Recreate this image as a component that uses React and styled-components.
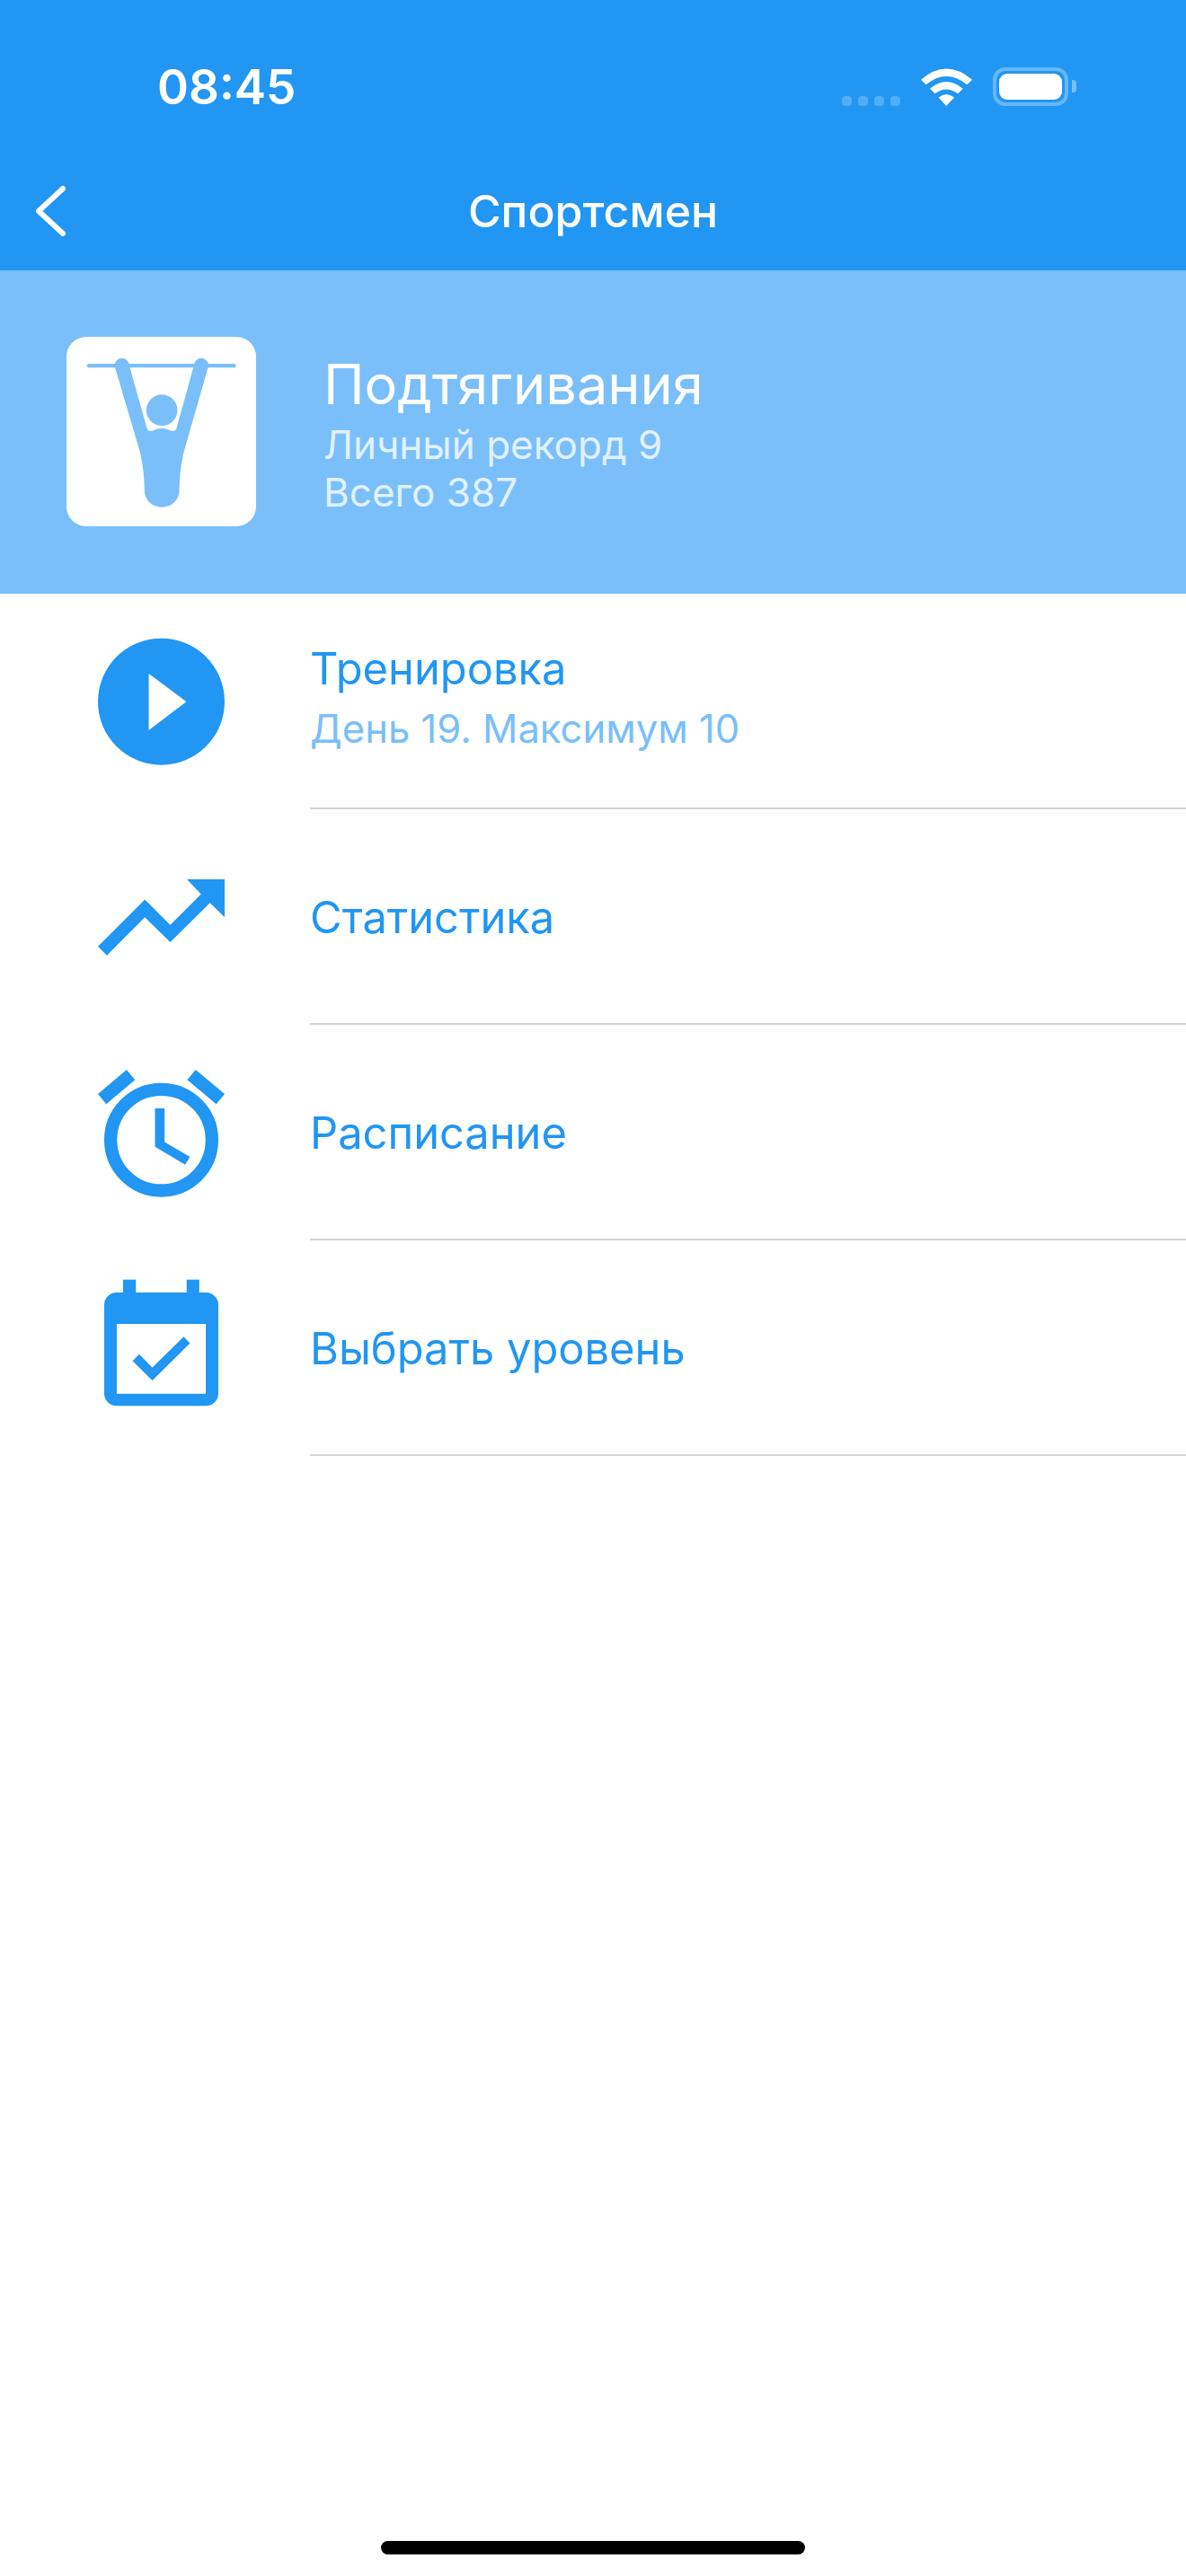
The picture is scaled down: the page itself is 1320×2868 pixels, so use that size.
import React from 'react';
import styled, { createGlobalStyle } from 'styled-components';

const GlobalStyle = createGlobalStyle`
  html, body {
    margin: 0;
    padding: 0;
    background: #fff;
  }
  body {
    font-family: Inter, "Noto Sans", "Liberation Sans", sans-serif;
  }
`;

const Screen = styled.div`
  width: 1320px;
  height: 2868px;
  display: flex;
  flex-direction: column;
  background: #fff;
  overflow: hidden;
`;

const TopBar = styled.header`
  background: #2196f3;
  height: 301px;
  box-sizing: border-box;
  display: flex;
  flex-direction: column;
`;

const StatusBar = styled.div`
  height: 160px;
  box-sizing: border-box;
  padding: 68px 122px 0 175px;
  display: flex;
  justify-content: space-between;
  align-items: flex-start;
`;

const Time = styled.span`
  color: #fff;
  font-size: 53px;
  font-weight: 600;
  line-height: 58px;
  letter-spacing: 0;
`;

const StatusIcons = styled.div`
  display: flex;
  align-items: flex-end;
  margin-top: 7px;
  height: 43px;
`;

const SignalDots = styled.div`
  display: flex;
  gap: 7px;
  margin-right: 23px;
`;

const SignalDot = styled.i`
  display: block;
  width: 11px;
  height: 11px;
  border-radius: 4px;
  background: rgba(255, 255, 255, 0.22);
`;

const Wifi = styled.svg`
  display: block;
  width: 57px;
  height: 42px;
  margin-right: 23px;
`;

const Battery = styled.div`
  width: 84px;
  height: 43px;
  box-sizing: border-box;
  border: 4px solid rgba(255, 255, 255, 0.32);
  border-radius: 14px;
  padding: 3px;
  display: flex;
`;

const BatteryFill = styled.div`
  flex: 1;
  background: #fff;
  border-radius: 9px;
`;

const BatteryNub = styled.div`
  width: 5px;
  height: 14px;
  margin: 0 0 15px 4px;
  background: rgba(255, 255, 255, 0.4);
  border-radius: 0 4px 4px 0;
`;

const NavBar = styled.nav`
  height: 141px;
  display: grid;
  grid-template-columns: 1fr auto 1fr;
  align-items: center;
  color: #fff;
`;

const BackIcon = styled.svg`
  display: block;
  width: 40px;
  height: 60px;
  margin: 8px 0 0 37px;
`;

const NavTitle = styled.h1`
  margin: 8px 0 0;
  font-size: 50px;
  font-weight: 500;
  line-height: 60px;
`;

const Hero = styled.section`
  height: 360px;
  background: #7abffa;
  display: flex;
  align-items: center;
  padding: 0 0 1px 74px;
  box-sizing: border-box;
`;

const ExerciseCard = styled.div`
  width: 211px;
  height: 211px;
  border-radius: 22px;
  background: #fff;
  margin-right: 75px;
`;

const ExerciseIcon = styled.svg`
  display: block;
  width: 100%;
  height: 100%;
`;

const HeroText = styled.div`
  display: flex;
  flex-direction: column;
  color: #fff;
  margin-top: 4px;
`;

const HeroTitle = styled.h2`
  margin: 0 0 4px;
  font-size: 61.3px;
  font-weight: 400;
  line-height: 74px;
`;

const HeroLine = styled.div`
  font-size: 44px;
  font-weight: 400;
  line-height: 53px;
  color: rgba(255, 255, 255, 0.8);
`;

const MenuList = styled.div`
  display: flex;
  flex-direction: column;
`;

const MenuRow = styled.div`
  height: 240px;
  display: flex;
  align-items: center;
  padding-left: 109px;
`;

const MenuIcon = styled.svg`
  display: block;
  width: 141px;
  height: 141px;
  flex: none;
  margin-right: 95px;
  overflow: visible;
`;

const MenuBody = styled.div`
  flex: 1;
  align-self: stretch;
  box-sizing: border-box;
  border-bottom: 2px solid #d4d4d4;
  padding-top: 3px;
  display: flex;
  flex-direction: column;
  justify-content: center;
  gap: 6px;
`;

const MenuTitle = styled.div`
  color: #2196f3;
  font-size: 48.8px;
  line-height: 60px;
`;

const MenuSub = styled.div`
  color: #7abffa;
  font-size: 43.6px;
  line-height: 54px;
  margin: 4px 0 9px;
`;

const HomeBar = styled.div`
  width: 472px;
  height: 15px;
  margin: auto auto 24px;
  background: #000;
  border-radius: 8px;
`;

const BLUE = '#2196f3';

const menu = [
  {
    title: 'Тренировка',
    sub: 'День 19. Максимум 10',
    vy: 91,
    art: (
      <>
        <circle cx="300" cy="302" r="212" fill={BLUE} />
        <polygon points="258,208 384,302 258,398" fill="#fff" />
      </>
    ),
  },
  {
    title: 'Статистика',
    vy: 61,
    art: (
      <polygon
        fill={BLUE}
        points="88,370 245,213 330,298 433,195 386,145 512,145 512,272 463,224 330,356 245,272 118,400"
      />
    ),
  },
  {
    title: 'Расписание',
    vy: 118,
    art: (
      <>
        <circle cx="300" cy="353" r="169.5" fill="none" stroke={BLUE} strokeWidth="43" />
        <polygon fill={BLUE} points="184,118 212,152 116,233 88,199" />
        <polygon fill={BLUE} points="415,118 512,199 484,233 387,152" />
        <polygon fill={BLUE} points="279,247 311,247 311,360 396,410 380,436 279,376" />
      </>
    ),
  },
  {
    title: 'Выбрать уровень',
    vy: 88,
    art: (
      <>
        <rect x="172" y="69" width="43" height="60" fill={BLUE} />
        <rect x="385" y="69" width="42" height="60" fill={BLUE} />
        <path
          fill={BLUE}
          fillRule="evenodd"
          d="M151 112H449A42 42 0 0 1 491 154V450A42 42 0 0 1 449 492H151A42 42 0 0 1 109 450V154A42 42 0 0 1 151 112ZM151 217V451H449V217Z"
        />
        <polygon fill={BLUE} points="204,341 226,319 270,363 375,260 396,282 270,407" />
      </>
    ),
  },
];

export default function App() {
  return (
    <Screen>
      <GlobalStyle />
      <TopBar>
        <StatusBar>
          <Time>08:45</Time>
          <StatusIcons>
            <SignalDots>
              <SignalDot />
              <SignalDot />
              <SignalDot />
              <SignalDot />
            </SignalDots>
            <Wifi viewBox="375 76 172 126">
              <path
                fill="#fff"
                d="M375 114Q460 40 547 114L530 131Q460 75 392 131ZM405 144Q460 98 516 144L499 161Q460 132 422 161ZM434 174Q460 152 487 174L460 202Z"
              />
            </Wifi>
            <Battery>
              <BatteryFill />
            </Battery>
            <BatteryNub />
          </StatusIcons>
        </StatusBar>
        <NavBar>
          <BackIcon viewBox="0 0 40 60">
            <polyline
              points="33,5 6,30 33,55"
              fill="none"
              stroke="#fff"
              strokeWidth="6"
              strokeLinecap="round"
              strokeLinejoin="round"
            />
          </BackIcon>
          <NavTitle>Спортсмен</NavTitle>
        </NavBar>
      </TopBar>

      <Hero>
        <ExerciseCard>
          <ExerciseIcon viewBox="103 75 632 633">
            <rect x="171" y="165" width="497" height="13" rx="6.5" fill="#7abffa" />
            <circle cx="421" cy="320" r="52" fill="#7abffa" />
            <path
              fill="#7abffa"
              d="M263 172A24.5 24.5 0 0 1 312 170L371 380Q375 392 388 389Q420 372 452 389Q466 392 470 380L528 170A24.5 24.5 0 0 1 577 172L497 450Q480 510 479 590A58 54 0 0 1 363 590Q362 510 345 450Z"
            />
          </ExerciseIcon>
        </ExerciseCard>
        <HeroText>
          <HeroTitle>Подтягивания</HeroTitle>
          <HeroLine>Личный рекорд 9</HeroLine>
          <HeroLine>Всего 387</HeroLine>
        </HeroText>
      </Hero>

      <MenuList>
        {menu.map((item) => (
          <MenuRow key={item.title}>
            <MenuIcon viewBox={`88 ${item.vy} 424 424`}>{item.art}</MenuIcon>
            <MenuBody>
              <MenuTitle>{item.title}</MenuTitle>
              {item.sub && <MenuSub>{item.sub}</MenuSub>}
            </MenuBody>
          </MenuRow>
        ))}
      </MenuList>

      <HomeBar />
    </Screen>
  );
}
